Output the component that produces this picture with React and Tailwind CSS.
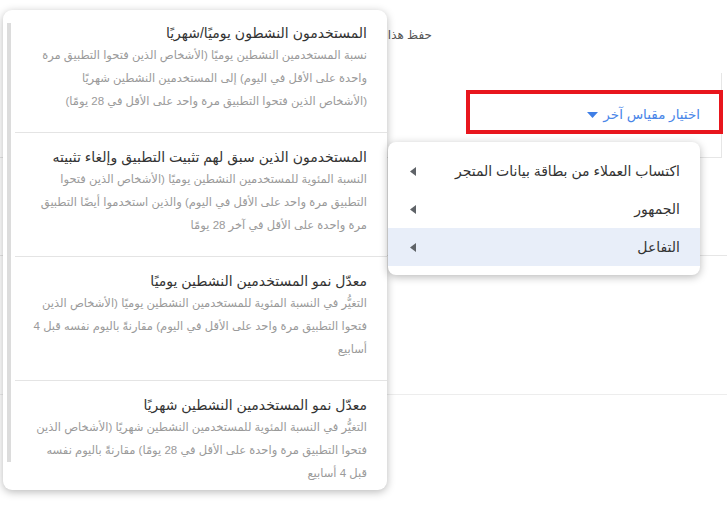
import React from "react";

const METRICS = [
  {
    title: "المستخدمون النشطون يوميًا/شهريًا",
    lines: [
      "نسبة المستخدمين النشطين يوميًا (الأشخاص الذين فتحوا التطبيق مرة",
      "واحدة على الأقل في اليوم) إلى المستخدمين النشطين شهريًا",
      "(الأشخاص الذين فتحوا التطبيق مرة واحد على الأقل في 28 يومًا)",
    ],
  },
  {
    title: "المستخدمون الذين سبق لهم تثبيت التطبيق وإلغاء تثبيته",
    lines: [
      "النسبة المئوية للمستخدمين النشطين يوميًا (الأشخاص الذين فتحوا",
      "التطبيق مرة واحد على الأقل في اليوم) والذين استخدموا أيضًا التطبيق",
      "مرة واحدة على الأقل في آخر 28 يومًا",
    ],
  },
  {
    title: "معدّل نمو المستخدمين النشطين يوميًا",
    lines: [
      "التغيُّر في النسبة المئوية للمستخدمين النشطين يوميًا (الأشخاص الذين",
      "فتحوا التطبيق مرة واحد على الأقل في اليوم) مقارنةً باليوم نفسه قبل 4",
      "أسابيع",
    ],
  },
  {
    title: "معدّل نمو المستخدمين النشطين شهريًا",
    lines: [
      "التغيُّر في النسبة المئوية للمستخدمين النشطين شهريًا (الأشخاص الذين",
      "فتحوا التطبيق مرة واحدة على الأقل في 28 يومًا) مقارنةً باليوم نفسه",
      "قبل 4 أسابيع",
    ],
  },
];

const CATEGORIES = [
  { label: "اكتساب العملاء من بطاقة بيانات المتجر", active: false },
  { label: "الجمهور", active: false },
  { label: "التفاعل", active: true },
];

function LeftArrow() {
  return (
    <svg width="6" height="9" viewBox="0 0 6 9" className="shrink-0">
      <path d="M6 0 L0 4.5 L6 9 Z" fill="#5f6368" />
    </svg>
  );
}

export default function App() {
  return (
    <div
      dir="rtl"
      className="relative w-[727px] h-[505px] overflow-hidden bg-white"
      style={{ fontFamily: '"Liberation Sans", "DejaVu Sans", sans-serif' }}
    >
      {/* page behind the menus */}
      <div className="pt-[27px]">
        <div className="pr-[295px] text-[12px] leading-[16px] text-[#555]">حفظ هذا</div>
        <div className="mt-[30px] mr-[5px] h-[85px] border-r border-b border-[#e6e6e6] flex items-center pr-[21px]">
          <div className="flex items-center gap-[5px] text-[13.5px] text-[#4a86e8]">
            <span>اختيار مقياس آخر</span>
            <svg width="11" height="6" viewBox="0 0 11 6">
              <path d="M0 0 H11 L5.5 6 Z" fill="#3f7fe6" />
            </svg>
          </div>
        </div>
        <div className="h-[98px] border-b border-[#e6e6e6]" />
        <div className="h-[139px] border-b border-[#ededed]" />
      </div>

      {/* red highlight annotation */}
      <div className="absolute left-[466px] top-[90px] w-[257px] h-[44px] border-4 border-[#e8161d]" />

      {/* metric list popup */}
      <div className="absolute left-[3px] top-[10px] w-[384px] h-[480px] bg-white rounded-[9px] shadow-[0_2px_8px_rgba(0,0,0,0.28)] overflow-hidden flex">
        <div className="flex-1 min-w-0 overflow-hidden">
          {METRICS.map((m, i) => (
            <div
              key={i}
              className={`pr-[20px] pl-[16px] pb-[19px] ${i === 0 ? "pt-[12px]" : "pt-[13px] border-t border-[#e4e4e4]"}`}
            >
              <div className="text-[14px] leading-[22px] font-medium text-[#333] whitespace-nowrap">{m.title}</div>
              {m.lines.map((l, j) => (
                <div key={j} className="text-[11.5px] leading-[23px] text-[#9a9a9a] whitespace-nowrap">
                  {l}
                </div>
              ))}
            </div>
          ))}
        </div>
        <div className="w-[4px] mt-[13px] h-[439px] ml-[4px] mr-[4px] shrink-0 bg-[#dcdcdc]" />
      </div>

      {/* category menu */}
      <div className="absolute left-[388px] top-[142px] w-[312px] bg-white rounded-[8px] shadow-[0_2px_8px_rgba(0,0,0,0.28)] pt-[10px] pb-[9px]">
        {CATEGORIES.map((c) => (
          <div
            key={c.label}
            className={`h-[38px] flex items-center justify-between pr-[20px] pl-[22px] text-[14px] text-[#333] ${c.active ? "bg-[#e8eef9]" : ""}`}
          >
            <span>{c.label}</span>
            <LeftArrow />
          </div>
        ))}
      </div>
    </div>
  );
}
